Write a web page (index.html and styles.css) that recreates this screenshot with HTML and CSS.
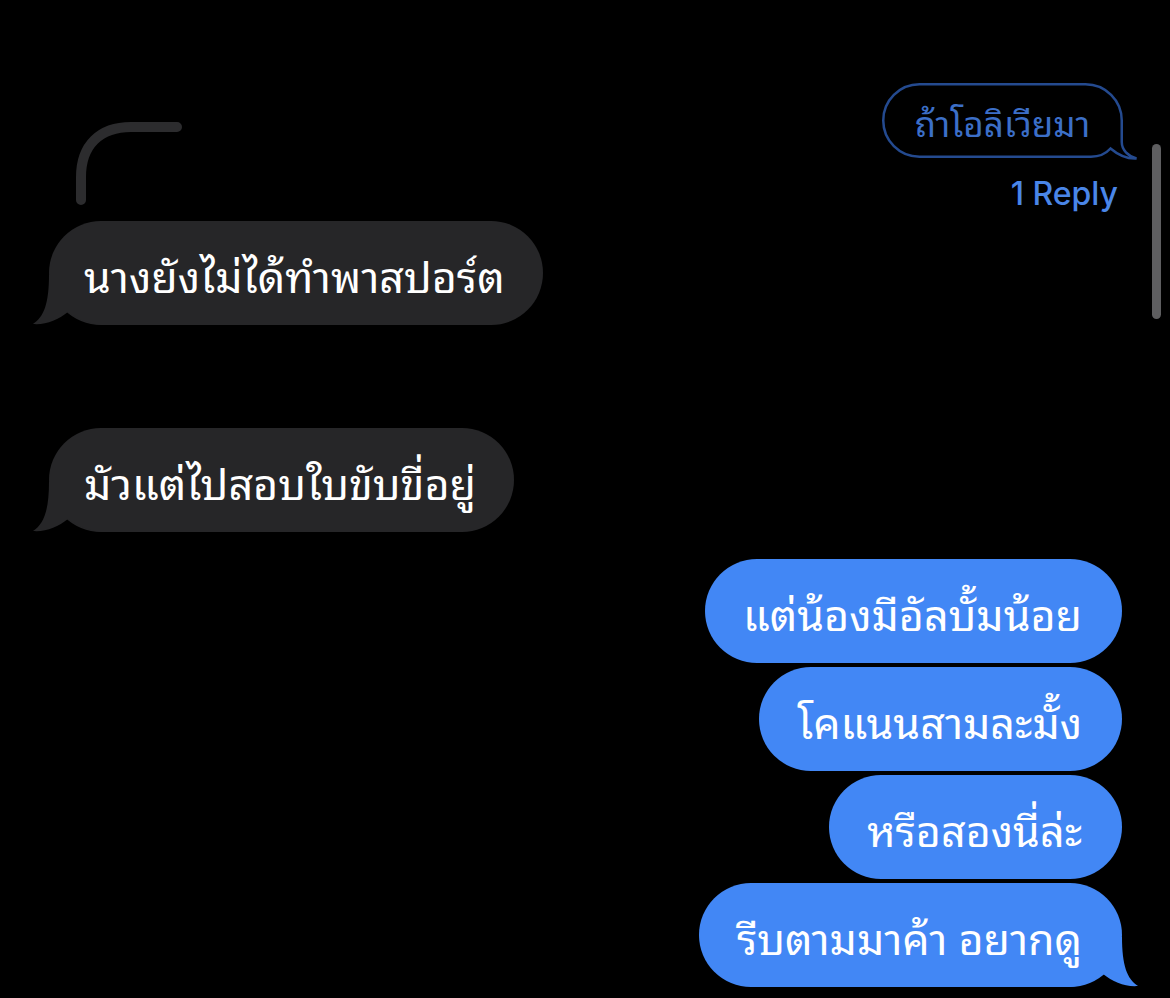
FILE: index.html
```html
<!DOCTYPE html>
<html lang="th">
<head>
<meta charset="utf-8">
<title>Messages</title>
<link rel="stylesheet" href="styles.css">
</head>
<body>
<div class="screen">
  <div class="top">
    <div class="left-col">
      <svg class="thread" width="115" height="90" viewBox="0 0 115 90">
        <path d="M11 83 L11 60 C11 28 30 10 61 10 L107 10" fill="none" stroke="#2c2c2e" stroke-width="10" stroke-linecap="round"/>
      </svg>
      <div class="bubble in"><span class="msg">นางยังไม่ได้ทำพาสปอร์ต</span><svg class="tail tail-left" width="70" height="50" viewBox="0 0 70 50"><path d="M17 0 C17 28 12 42 1 49 C14 50 26 45 36 37 C46 44 58 49 70 50 L70 0 Z"/></svg></div>
    </div>
    <div class="right-col">
      <div class="reply-bubble">
        <svg class="reply-outline" width="258" height="79" viewBox="0 0 258 79"><path d="M38.5 2.25 H204.5 A36.25 36.25 0 0 1 240.75 38.5 V60 C240.75 68 247 74 255.5 76.5 C246 77 236 72 229.5 66.5 C225 71.5 219 74.75 210 74.75 H38.5 A36.25 36.25 0 0 1 2.25 38.5 A36.25 36.25 0 0 1 38.5 2.25 Z" fill="none" stroke="#244a8f" stroke-width="2.5"/></svg>
        <span class="reply-text">ถ้าโอลิเวียมา</span>
      </div>
      <div class="reply-count">1 Reply</div>
    </div>
  </div>

  <div class="bubble in second"><span class="msg">มัวแต่ไปสอบใบขับขี่อยู่</span><svg class="tail tail-left" width="70" height="50" viewBox="0 0 70 50"><path d="M17 0 C17 28 12 42 1 49 C14 50 26 45 36 37 C46 44 58 49 70 50 L70 0 Z"/></svg></div>

  <div class="outgoing">
    <div class="bubble out"><span class="msg">แต่น้องมีอัลบั้มน้อย</span></div>
    <div class="bubble out"><span class="msg">โคแนนสามละมั้ง</span></div>
    <div class="bubble out"><span class="msg">หรือสองนี่ล่ะ</span></div>
    <div class="bubble out"><span class="msg">รีบตามมาค้า อยากดู</span><svg class="tail tail-right" width="70" height="50" viewBox="0 0 70 50"><path d="M17 0 C17 28 12 42 1 49 C14 50 26 45 36 37 C46 44 58 49 70 50 L70 0 Z"/></svg></div>
  </div>

  <div class="scrollbar"></div>
</div>
</body>
</html>
```

FILE: styles.css
```css
* { box-sizing: border-box; }

html, body {
  margin: 0;
  padding: 0;
  background: #000;
}

body {
  font-family: "Noto Sans Thai Looped", "Noto Serif Thai", "Noto Sans Thai", "Noto Sans", "DejaVu Sans", sans-serif;
  color: #fff;
}

.screen {
  position: relative;
  width: 1170px;
  height: 998px;
  overflow: hidden;
  padding: 0 48px 0 49px;
  display: flex;
  flex-direction: column;
}

.top {
  display: flex;
  justify-content: space-between;
  align-items: flex-start;
}

.left-col {
  display: flex;
  flex-direction: column;
  align-items: flex-start;
}

.thread {
  display: block;
  margin-top: 117px;
  margin-left: 21px;
}

.bubble {
  position: relative;
  isolation: isolate;
  height: 104px;
  border-radius: 52px;
  padding: 0 38px 0 35px;
  display: flex;
  align-items: center;
  font-size: 43px;
  white-space: nowrap;
}

.msg {
  position: relative;
}

.bubble.in {
  background: #262628;
  margin-top: 14px;
  fill: #262628;
}

.bubble.in.second {
  margin-top: 103px;
  align-self: flex-start;
}

.tail {
  position: absolute;
  bottom: 0;
  z-index: -1;
}

.tail-left {
  left: -17px;
}

.tail-right {
  right: -17px;
  transform: scaleX(-1);
}

.outgoing {
  margin-top: 27px;
  display: flex;
  flex-direction: column;
  align-items: flex-end;
  gap: 4px;
}

.bubble.out {
  background: #4287f5;
  fill: #4287f5;
  padding: 0 40px 0 38px;
}

.right-col {
  display: flex;
  flex-direction: column;
  align-items: flex-end;
  margin-right: -1px;
}

.reply-bubble {
  position: relative;
  margin-top: 83px;
  width: 241px;
  height: 75px;
  display: flex;
  align-items: center;
  justify-content: center;
}

.reply-outline {
  position: absolute;
  left: -1px;
  top: -1px;
}

.reply-text {
  position: relative;
  font-size: 35px;
  color: #3c6fc8;
}

.reply-count {
  margin-top: 18px;
  margin-right: 5px;
  font-family: Inter, "Liberation Sans", sans-serif;
  font-size: 32px;
  font-weight: 500;
  color: #4a86e8;
  line-height: 36px;
}

.scrollbar {
  position: absolute;
  left: 1152px;
  top: 144px;
  width: 9px;
  height: 175px;
  border-radius: 5px;
  background: #5e5e60;
}
```
